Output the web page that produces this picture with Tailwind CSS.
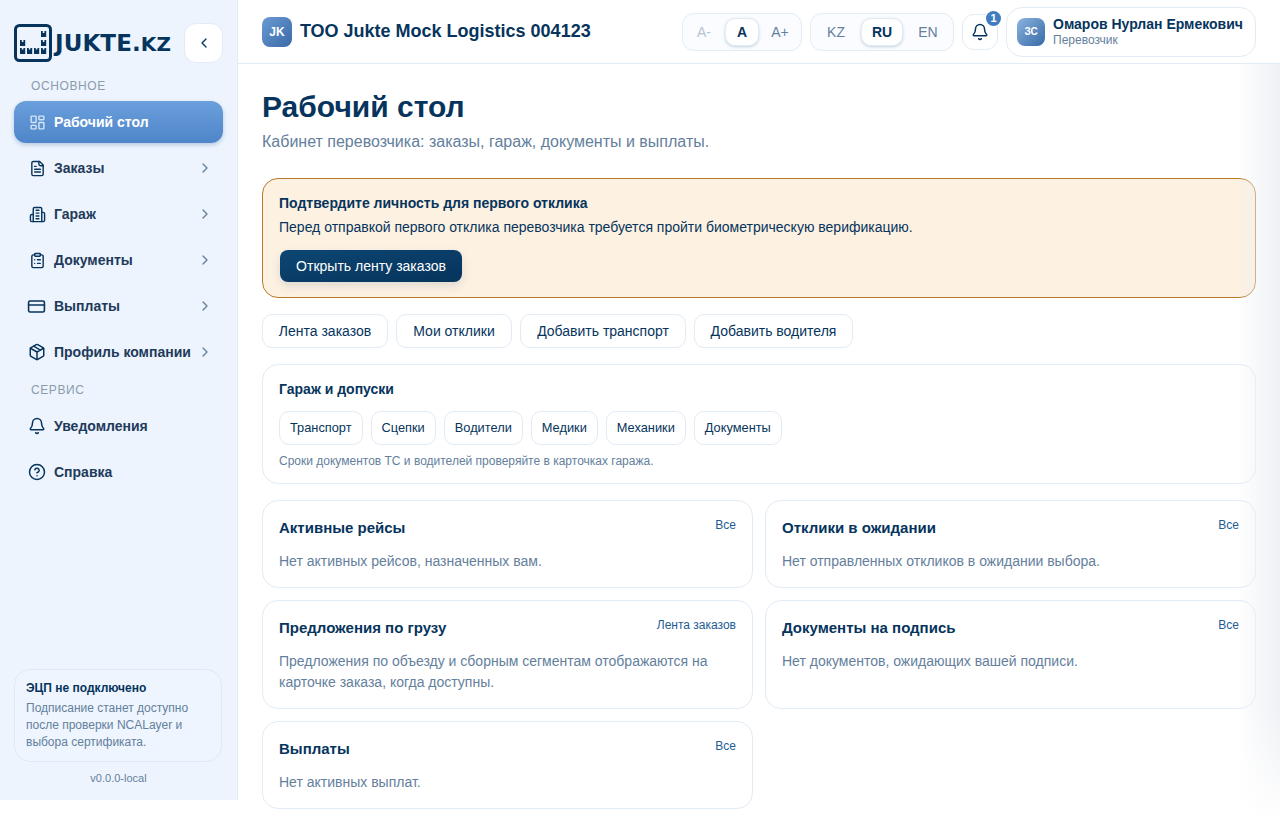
<!doctype html>
<html lang="ru">
<head>
<meta charset="utf-8">
<title>Рабочий стол</title>
<script src="https://cdn.jsdelivr.net/npm/@tailwindcss/browser@4"></script>
</head>
<body class="bg-white font-['Liberation_Sans',Arial,sans-serif] text-[#06345c] overflow-hidden">
<div class="relative flex h-[833px] w-[1280px] overflow-hidden items-start">
  <aside class="flex h-[800px] w-[238px] shrink-0 flex-col border-r border-[#e2ebf6] bg-[#edf4fd] px-[14px]">
    <div class="flex h-[63px] items-end justify-between">
      <div class="flex items-center gap-[3px] pb-px">
        <svg class="h-[38px] w-[38px]" viewBox="0 0 38 38" fill="none"><rect x="1.5" y="1.5" width="35" height="35" rx="4" stroke="#06345c" stroke-width="3"/><path fill="#06345c" d="M6 16h1.8v2h1.6v-2h1.8v6H6zM6 24h1.8v1.6h1.6V24h1.8v6H6zM13 24h1.8v1.6h1.6V24h1.8v6H13zM20 24h1.8v1.6h1.6V24h1.8v6H20zM27 24h1.8v1.6h1.6V24h1.8v6H27zM27 16h1.8v2h1.6v-2h1.8v6H27zM27 7h1.8v2h1.6V7h1.8v6H27z"/></svg>
        <span class="font-['DejaVu_Sans',sans-serif] text-[23px] font-bold leading-none tracking-[0.1px] text-[#06345c]">JUKTE.<span class="text-[20px]">KZ</span></span>
      </div>
      <button class="flex h-[40px] w-[39px] items-center justify-center rounded-xl border border-[#e2ebf6] bg-white"><svg class="h-4 w-4" viewBox="0 0 24 24" fill="none" stroke="#06345c" stroke-width="2" stroke-linecap="round" stroke-linejoin="round"><path d="m15 18-6-6 6-6"/></svg></button>
    </div>
    <div class="mt-[15px] h-[16px] pl-[17px] text-xs leading-[16px] tracking-[0.6px] text-[#8a9bad]">ОСНОВНОЕ</div>
    <nav class="mt-[7px] flex flex-col gap-[4px]">
      <a class="flex h-[42px] items-center gap-[8px] rounded-xl bg-gradient-to-b from-[#6a9fdc] to-[#4f86c9] pl-[15px] pr-3 text-sm font-bold text-white shadow-[0_2px_4px_rgba(60,100,160,0.3)]">
        <svg class="h-[17px] w-[17px] shrink-0" viewBox="0 0 24 24" fill="none" stroke="#d5e4f6" stroke-width="2" stroke-linecap="round" stroke-linejoin="round"><rect x="3" y="3" width="7" height="9" rx="1"/><rect x="14" y="3" width="7" height="5" rx="1"/><rect x="14" y="12" width="7" height="9" rx="1"/><rect x="3" y="16" width="7" height="5" rx="1"/></svg>
        Рабочий стол
      </a>
      <a class="flex h-[42px] items-center gap-[8px] rounded-xl pl-[15px] pr-[10px] text-sm font-bold text-[#1f3a5a]">
        <svg class="h-[17px] w-[17px] shrink-0" viewBox="0 0 24 24" fill="none" stroke="#06345c" stroke-width="2" stroke-linecap="round" stroke-linejoin="round"><path d="M15 2H6a2 2 0 0 0-2 2v16a2 2 0 0 0 2 2h12a2 2 0 0 0 2-2V7z"/><path d="M14 2v4a2 2 0 0 0 2 2h4M10 9H8M16 13H8M16 17H8"/></svg>
        <span class="flex-1">Заказы</span>
        <svg class="h-4 w-4" viewBox="0 0 24 24" fill="none" stroke="#64809c" stroke-width="2" stroke-linecap="round" stroke-linejoin="round"><path d="m9 18 6-6-6-6"/></svg>
      </a>
      <a class="flex h-[42px] items-center gap-[8px] rounded-xl pl-[15px] pr-[10px] text-sm font-bold text-[#1f3a5a]">
        <svg class="h-[17px] w-[17px] shrink-0" viewBox="0 0 24 24" fill="none" stroke="#06345c" stroke-width="2" stroke-linecap="round" stroke-linejoin="round"><path d="M6 22V4a2 2 0 0 1 2-2h8a2 2 0 0 1 2 2v18z"/><path d="M6 12H4a2 2 0 0 0-2 2v6a2 2 0 0 0 2 2h2M18 9h2a2 2 0 0 1 2 2v9a2 2 0 0 1-2 2h-2M10 6h4M10 10h4M10 14h4M10 18h4"/></svg>
        <span class="flex-1">Гараж</span>
        <svg class="h-4 w-4" viewBox="0 0 24 24" fill="none" stroke="#64809c" stroke-width="2" stroke-linecap="round" stroke-linejoin="round"><path d="m9 18 6-6-6-6"/></svg>
      </a>
      <a class="flex h-[42px] items-center gap-[8px] rounded-xl pl-[15px] pr-[10px] text-sm font-bold text-[#1f3a5a]">
        <svg class="h-[17px] w-[17px] shrink-0" viewBox="0 0 24 24" fill="none" stroke="#06345c" stroke-width="2" stroke-linecap="round" stroke-linejoin="round"><rect x="8" y="2" width="8" height="4" rx="1"/><path d="M16 4h2a2 2 0 0 1 2 2v14a2 2 0 0 1-2 2H6a2 2 0 0 1-2-2V6a2 2 0 0 1 2-2h2M12 11h4M12 16h4M8 11h.01M8 16h.01"/></svg>
        <span class="flex-1">Документы</span>
        <svg class="h-4 w-4" viewBox="0 0 24 24" fill="none" stroke="#64809c" stroke-width="2" stroke-linecap="round" stroke-linejoin="round"><path d="m9 18 6-6-6-6"/></svg>
      </a>
      <a class="flex h-[42px] items-center gap-[8px] rounded-xl pl-[13px] pr-[10px] text-sm font-bold text-[#1f3a5a]">
        <svg class="h-[19px] w-[19px] shrink-0" viewBox="0 0 24 24" fill="none" stroke="#06345c" stroke-width="2" stroke-linecap="round" stroke-linejoin="round"><rect x="2" y="5" width="20" height="14" rx="2"/><path d="M2 10h20"/></svg>
        <span class="flex-1">Выплаты</span>
        <svg class="h-4 w-4" viewBox="0 0 24 24" fill="none" stroke="#64809c" stroke-width="2" stroke-linecap="round" stroke-linejoin="round"><path d="m9 18 6-6-6-6"/></svg>
      </a>
      <a class="flex h-[42px] items-center gap-[8px] rounded-xl pl-[14px] pr-[10px] text-sm font-bold text-[#1f3a5a]">
        <svg class="h-[18px] w-[18px] shrink-0" viewBox="0 0 24 24" fill="none" stroke="#06345c" stroke-width="2" stroke-linecap="round" stroke-linejoin="round"><path d="M11 21.73a2 2 0 0 0 2 0l7-4A2 2 0 0 0 21 16V8a2 2 0 0 0-1-1.73l-7-4a2 2 0 0 0-2 0l-7 4A2 2 0 0 0 3 8v8a2 2 0 0 0 1 1.73z"/><path d="M12 22V12M3.3 7 12 12l8.7-5M7.5 4.27l9 5.15"/></svg>
        <span class="flex-1 whitespace-nowrap">Профиль компании</span>
        <svg class="-ml-[2px] h-4 w-4" viewBox="0 0 24 24" fill="none" stroke="#64809c" stroke-width="2" stroke-linecap="round" stroke-linejoin="round"><path d="m9 18 6-6-6-6"/></svg>
      </a>
    </nav>
    <div class="mt-[9px] h-[16px] pl-[17px] text-xs leading-[16px] tracking-[0.6px] text-[#8a9bad]">СЕРВИС</div>
    <nav class="mt-[7px] flex flex-col gap-[4px]">
      <a class="flex h-[42px] items-center gap-[8px] rounded-xl pl-[14px] text-sm font-bold text-[#1f3a5a]">
        <svg class="h-[18px] w-[18px] shrink-0" viewBox="0 0 24 24" fill="none" stroke="#06345c" stroke-width="2" stroke-linecap="round" stroke-linejoin="round"><path d="M10.27 21a2 2 0 0 0 3.46 0"/><path d="M3.26 15.33A1 1 0 0 0 4 17h16a1 1 0 0 0 .74-1.67C19.41 13.96 18 12.5 18 8A6 6 0 0 0 6 8c0 4.5-1.41 5.96-2.74 7.33"/></svg>
        Уведомления
      </a>
      <a class="flex h-[42px] items-center gap-[8px] rounded-xl pl-[14px] text-sm font-bold text-[#1f3a5a]">
        <svg class="h-[18px] w-[18px] shrink-0" viewBox="0 0 24 24" fill="none" stroke="#06345c" stroke-width="2" stroke-linecap="round" stroke-linejoin="round"><circle cx="12" cy="12" r="10"/><path d="M9.09 9a3 3 0 0 1 5.83 1c0 2-3 3-3 3M12 17h.01"/></svg>
        Справка
      </a>
    </nav>
    <div class="mr-px mt-auto rounded-2xl border border-[#dfe9f6] bg-[#eef5fe] px-[11px] pb-[10px] pt-[10px]">
      <div class="text-xs font-bold leading-[16px] text-[#06345c]">ЭЦП не подключено</div>
      <p class="mt-[4px] text-xs leading-[17px] text-[#64809c]">Подписание станет доступно после проверки NCALayer и выбора сертификата.</p>
    </div>
    <div class="mb-[15px] mt-[9px] text-center text-[11px] leading-[14px] text-[#64809c]">v0.0.0-local</div>
  </aside>

  <div class="flex min-w-0 flex-1 flex-col">
    <header class="flex h-[64px] items-center justify-between border-b border-[#e2ebf6] pl-[24px] pr-[24px]">
      <div class="flex items-center gap-[8px]">
        <div class="flex h-[30px] w-[30px] items-center justify-center rounded-lg bg-gradient-to-br from-[#6b9ad3] to-[#3a6ba8] text-xs font-bold text-white">JK</div>
        <div class="-mt-[2px] whitespace-nowrap text-lg font-bold leading-[26px] text-[#06345c]">ТОО Jukte Mock Logistics 004123</div>
      </div>
      <div class="flex items-center gap-[8px]">
        <div class="flex h-[38px] items-center gap-[4px] rounded-xl border border-[#e2ebf6] bg-[#fafcff] px-[4px] text-sm">
          <span class="w-[34px] text-center text-[#b6c3d1]">A-</span>
          <span class="flex h-[28px] w-[34px] items-center justify-center rounded-[10px] border border-[#e2ebf6] bg-white font-bold text-[#06345c] shadow-[0_1px_3px_rgba(40,80,130,0.25)]">A</span>
          <span class="w-[34px] text-center text-[#64809c]">A+</span>
        </div>
        <div class="flex h-[38px] items-center gap-[4px] rounded-xl border border-[#e2ebf6] bg-[#fafcff] px-[4px] text-sm">
          <span class="w-[42px] text-center text-[#64809c]">KZ</span>
          <span class="flex h-[28px] w-[42px] items-center justify-center rounded-[10px] border border-[#e2ebf6] bg-white font-bold text-[#06345c] shadow-[0_1px_3px_rgba(40,80,130,0.25)]">RU</span>
          <span class="w-[42px] text-center text-[#64809c]">EN</span>
        </div>
        <button class="relative flex h-[36px] w-[36px] items-center justify-center rounded-xl border border-[#e2ebf6] bg-white">
          <svg class="h-[18px] w-[18px]" viewBox="0 0 24 24" fill="none" stroke="#06345c" stroke-width="2" stroke-linecap="round" stroke-linejoin="round"><path d="M10.27 21a2 2 0 0 0 3.46 0"/><path d="M3.26 15.33A1 1 0 0 0 4 17h16a1 1 0 0 0 .74-1.67C19.41 13.96 18 12.5 18 8A6 6 0 0 0 6 8c0 4.5-1.41 5.96-2.74 7.33"/></svg>
          <span class="absolute -right-[4px] -top-[4px] flex h-[15px] w-[15px] items-center justify-center rounded-full bg-[#3f7cc0] text-[11px] font-bold leading-none text-white">1</span>
        </button>
        <div class="flex h-[50px] w-[250px] items-center gap-[8px] rounded-2xl border border-[#e2ebf6] bg-white pl-[10px]">
          <div class="flex h-[28px] w-[28px] shrink-0 items-center justify-center rounded-lg bg-gradient-to-br from-[#8db4de] to-[#356aa6] text-[10px] font-bold text-white">ЗС</div>
          <div class="-mt-[2px] min-w-0">
            <div class="whitespace-nowrap text-sm font-bold leading-[18px] text-[#06345c]">Омаров Нурлан Ермекович</div>
            <div class="text-xs leading-[14px] text-[#64809c]">Перевозчик</div>
          </div>
        </div>
      </div>
    </header>

    <main class="flex flex-col px-[24px] pt-[24px]">
      <h1 class="text-3xl font-bold leading-[38px] text-[#06345c]">Рабочий стол</h1>
      <p class="mt-[4px] text-base leading-[24px] text-[#64809c]">Кабинет перевозчика: заказы, гараж, документы и выплаты.</p>

      <section class="mt-[24px] h-[120px] rounded-2xl border border-[#b97a28] bg-[#fdf1e2] px-[16px] pt-[15px]">
        <div class="text-sm font-bold leading-[18px] text-[#06345c]">Подтвердите личность для первого отклика</div>
        <p class="mt-[6px] text-sm leading-[18px] text-[#06345c]">Перед отправкой первого отклика перевозчика требуется пройти биометрическую верификацию.</p>
        <button class="ml-px mt-[14px] flex h-[32px] w-[182px] items-center justify-center rounded-lg bg-gradient-to-br from-[#0d4673] to-[#06345c] text-sm text-white shadow-[0_4px_10px_rgba(6,52,92,0.12)]">Открыть ленту заказов</button>
      </section>

      <div class="mt-[16px] flex gap-[8px] text-sm text-[#06345c]">
        <a class="flex h-[34px] w-[126px] items-center justify-center rounded-[10px] border border-[#e2ebf6] bg-white">Лента заказов</a>
        <a class="flex h-[34px] w-[116px] items-center justify-center rounded-[10px] border border-[#e2ebf6] bg-white">Мои отклики</a>
        <a class="flex h-[34px] w-[166px] items-center justify-center rounded-[10px] border border-[#e2ebf6] bg-white">Добавить транспорт</a>
        <a class="flex h-[34px] w-[159px] items-center justify-center rounded-[10px] border border-[#e2ebf6] bg-white">Добавить водителя</a>
      </div>

      <section class="mt-[16px] h-[120px] rounded-2xl border border-[#e2ebf6] bg-white px-[16px] pt-[15px]">
        <div class="text-sm font-bold leading-[18px] text-[#06345c]">Гараж и допуски</div>
        <div class="mt-[13px] flex gap-[8px] text-[12.8px] text-[#06345c]">
          <a class="flex h-[34px] items-center rounded-[10px] border border-[#e2ebf6] px-[10px]">Транспорт</a>
          <a class="flex h-[34px] items-center rounded-[10px] border border-[#e2ebf6] px-[10px]">Сцепки</a>
          <a class="flex h-[34px] items-center rounded-[10px] border border-[#e2ebf6] px-[10px]">Водители</a>
          <a class="flex h-[34px] items-center rounded-[10px] border border-[#e2ebf6] px-[10px]">Медики</a>
          <a class="flex h-[34px] items-center rounded-[10px] border border-[#e2ebf6] px-[10px]">Механики</a>
          <a class="flex h-[34px] items-center rounded-[10px] border border-[#e2ebf6] px-[10px]">Документы</a>
        </div>
        <p class="mt-[8px] text-xs leading-[16px] text-[#64809c]">Сроки документов ТС и водителей проверяйте в карточках гаража.</p>
      </section>

      <div class="mt-[16px] grid grid-cols-2 items-stretch gap-[12px]">
        <article class="h-[88px] rounded-2xl border border-[#e2ebf6] bg-white px-[16px] pt-[16px]">
          <div class="flex justify-between"><h2 class="pt-px text-[15px] font-bold leading-[20px]">Активные рейсы</h2><a class="text-xs leading-[16px] text-[#1e5c94]">Все</a></div>
          <p class="mt-[13px] text-sm leading-[20px] text-[#64809c]">Нет активных рейсов, назначенных вам.</p>
        </article>
        <article class="h-[88px] rounded-2xl border border-[#e2ebf6] bg-white px-[16px] pt-[16px]">
          <div class="flex justify-between"><h2 class="pt-px text-[15px] font-bold leading-[20px]">Отклики в ожидании</h2><a class="text-xs leading-[16px] text-[#1e5c94]">Все</a></div>
          <p class="mt-[13px] text-sm leading-[20px] text-[#64809c]">Нет отправленных откликов в ожидании выбора.</p>
        </article>
        <article class="h-[109px] rounded-2xl border border-[#e2ebf6] bg-white px-[16px] pt-[16px]">
          <div class="flex justify-between"><h2 class="pt-px text-[15px] font-bold leading-[20px]">Предложения по грузу</h2><a class="text-xs leading-[16px] text-[#1e5c94]">Лента заказов</a></div>
          <p class="mt-[13px] text-sm leading-[21px] text-[#64809c]">Предложения по объезду и сборным сегментам отображаются на карточке заказа, когда доступны.</p>
        </article>
        <article class="h-[109px] rounded-2xl border border-[#e2ebf6] bg-white px-[16px] pt-[16px]">
          <div class="flex justify-between"><h2 class="pt-px text-[15px] font-bold leading-[20px]">Документы на подпись</h2><a class="text-xs leading-[16px] text-[#1e5c94]">Все</a></div>
          <p class="mt-[13px] text-sm leading-[21px] text-[#64809c]">Нет документов, ожидающих вашей подписи.</p>
        </article>
        <article class="h-[88px] rounded-2xl border border-[#e2ebf6] bg-white px-[16px] pt-[16px]">
          <div class="flex justify-between"><h2 class="pt-px text-[15px] font-bold leading-[20px]">Выплаты</h2><a class="text-xs leading-[16px] text-[#1e5c94]">Все</a></div>
          <p class="mt-[13px] text-sm leading-[20px] text-[#64809c]">Нет активных выплат.</p>
        </article>
      </div>
    </main>
  </div>
  <div class="pointer-events-none absolute right-0 top-[64px] h-[760px] w-[44px] bg-gradient-to-r from-transparent to-[#eff1f5] [mask-image:linear-gradient(to_bottom,black_85%,transparent)]"></div>
</div>
</body>
</html>
